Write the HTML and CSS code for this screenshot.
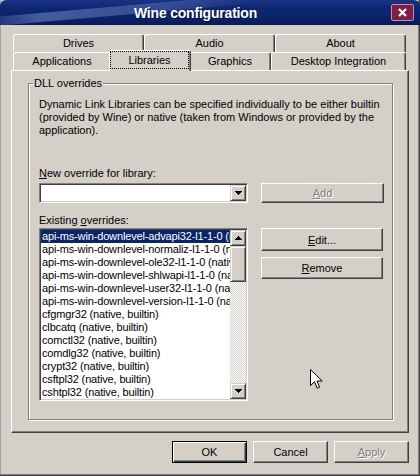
FILE: index.html
```html
<!DOCTYPE html>
<html lang="en">
<head>
  <meta charset="UTF-8" />
  <title>Wine configuration</title>
  <link rel="stylesheet" href="styles.css">
</head>
<body>
<div class="window">

  <!-- Title bar -->
  <div class="titlebar">
    <span class="title">Wine configuration</span>
    <span class="close-btn">
      <svg width="9" height="9" viewBox="0 0 9 9"><path d="M1 1L8 8M8 1L1 8" stroke="#fff" stroke-width="2.2"/></svg>
    </span>
  </div>

  <div class="client">
    <!-- Tabs -->
    <div class="tab-row">
      <div class="tab t-back">Drives</div>
      <div class="tab t-back">Audio</div>
      <div class="tab t-back">About</div>
    </div>
    <div class="tab-row">
      <div class="tab t-apps">Applications</div>
      <div class="tab t-libs active"><span class="focus">Libraries</span></div>
      <div class="tab t-gfx">Graphics</div>
      <div class="tab t-desk">Desktop Integration</div>
    </div>

    <!-- Tab page -->
    <div class="panel">
      <div class="group">
        <span class="group-label">DLL overrides</span>
        <p class="desc">Dynamic Link Libraries can be specified individually to be either builtin<br>(provided by Wine) or native (taken from Windows or provided by the<br>application).</p>

        <div class="field-label"><u>N</u>ew override for library:</div>
        <div class="row combo-row">
          <div class="combo">
            <div class="sbtn combo-btn">
              <svg width="7" height="4" viewBox="0 0 7 4" shape-rendering="crispEdges"><path d="M0 0h7v1H0zM1 1h5v1H1zM2 2h3v1H2zM3 3h1v1H3z"/></svg>
            </div>
          </div>
          <button class="btn disabled add-btn"><u>A</u>dd</button>
        </div>

        <div class="field-label second">Existing <u>o</u>verrides:</div>
        <div class="row">
          <div class="listbox">
            <ul class="items">
              <li class="selected">api-ms-win-downlevel-advapi32-l1-1-0 (native, builtin)</li>
              <li>api-ms-win-downlevel-normaliz-l1-1-0 (native, builtin)</li>
              <li>api-ms-win-downlevel-ole32-l1-1-0 (native, builtin)</li>
              <li>api-ms-win-downlevel-shlwapi-l1-1-0 (native, builtin)</li>
              <li>api-ms-win-downlevel-user32-l1-1-0 (native, builtin)</li>
              <li>api-ms-win-downlevel-version-l1-1-0 (native, builtin)</li>
              <li>cfgmgr32 (native, builtin)</li>
              <li>clbcatq (native, builtin)</li>
              <li>comctl32 (native, builtin)</li>
              <li>comdlg32 (native, builtin)</li>
              <li>crypt32 (native, builtin)</li>
              <li>csftpl32 (native, builtin)</li>
              <li>cshtpl32 (native, builtin)</li>
            </ul>
            <div class="scrollbar">
              <div class="sbtn">
                <svg width="7" height="4" viewBox="0 0 7 4" shape-rendering="crispEdges"><path d="M3 0h1v1H3zM2 1h3v1H2zM1 2h5v1H1zM0 3h7v1H0z"/></svg>
              </div>
              <div class="sbtn thumb"></div>
              <div class="track"></div>
              <div class="sbtn">
                <svg width="7" height="4" viewBox="0 0 7 4" shape-rendering="crispEdges"><path d="M0 0h7v1H0zM1 1h5v1H1zM2 2h3v1H2zM3 3h1v1H3z"/></svg>
              </div>
            </div>
          </div>
          <div class="side-btns">
            <button class="btn edit-btn"><u>E</u>dit...</button>
            <button class="btn remove-btn"><u>R</u>emove</button>
          </div>
        </div>
      </div>
    </div>

    <!-- Dialog buttons -->
    <div class="footer">
      <button class="btn dlg default">OK</button>
      <button class="btn dlg">Cancel</button>
      <button class="btn dlg disabled"><u>A</u>pply</button>
    </div>
  </div>

  <!-- mouse pointer -->
  <svg class="cursor" width="13" height="21" viewBox="0 0 13 21">
    <path d="M0.5 0.5V16.5L4.5 12.8L7.2 19.2L9.6 18.2L7 12H12.2Z" fill="#fff" stroke="#000" stroke-width="1" stroke-linejoin="miter"/>
  </svg>
</div>
</body>
</html>
```

FILE: styles.css
```css
body {
  margin: 0;
  font-family: "Liberation Sans", Arial, sans-serif;
  font-size: 11px;
  color: #000;
  background: #d4d0c8;
}
u {
  text-decoration: underline;
  text-underline-offset: 1px;
}

.window {
  position: relative;
  width: 420px;
  height: 476px;
  box-sizing: border-box;
  background: #d4d0c8;
  box-shadow: inset -1px -1px #404040, inset -2px -2px #808080, inset 1px 0 #a8a49c;
  overflow: hidden;
}

/* title bar */
.titlebar {
  position: relative;
  height: 25px;
  display: flex;
  align-items: center;
  border-radius: 6px 6px 0 0;
  background: linear-gradient(to bottom, #1a3484 0%, #0c2672 35%, #0a236a 70%, #081c58 100%);
  overflow: hidden;
}
.titlebar::before {
  content: "";
  position: absolute;
  left: -30px;
  top: 7px;
  width: 280px;
  height: 9px;
  background: linear-gradient(to right, rgba(110,130,195,0) 0%, rgba(110,130,195,.6) 25%, rgba(110,130,195,.4) 70%, rgba(110,130,195,0) 100%);
  transform: rotate(-5deg);
}
.title {
  position: relative;
  flex: 1;
  text-align: center;
  color: #fff;
  font-weight: bold;
  font-size: 14px;
  letter-spacing: -0.2px;
  text-shadow: 1px 1px 0 #05103a;
}
.close-btn {
  position: relative;
  width: 23px;
  height: 17px;
  margin-right: 6px;
  box-sizing: border-box;
  border: 1px solid #c58ea4;
  border-radius: 2px;
  background: #7c1f47;
  display: flex;
  align-items: center;
  justify-content: center;
}

.client {
  padding: 9px 11px 0 11px;
}

/* tabs */
.tab-row {
  display: flex;
  height: 18px;
  margin-left: 2px;
}
.tab {
  box-sizing: border-box;
  height: 18px;
  line-height: 17px;
  text-align: center;
  white-space: nowrap;
  background: #d4d0c8;
  border-top: 1px solid #fff;
  border-left: 1px solid #fff;
  border-right: 1px solid #404040;
  box-shadow: inset -1px 0 #808080;
  border-radius: 3px 3px 0 0;
}
.t-back { width: 131px; }
.t-apps { width: 98px; }
.t-libs { width: 78px; }
.t-gfx { width: 82px; }
.t-desk { width: 135px; }

.tab.active {
  position: relative;
  z-index: 1;
  width: 82px;
  height: 21px;
  margin: -2px -2px -1px -2px;
  padding: 1px 2px 2px 1px;
  line-height: 16px;
}
.tab.active .focus {
  display: block;
  height: 16px;
  outline: 1px dotted #000;
}

/* tab page */
.panel {
  box-sizing: border-box;
  width: 398px;
  height: 363px;
  border: 1px solid;
  border-color: #fff #404040 #404040 #fff;
  box-shadow: inset -1px -1px #808080;
  padding: 12px 0 0 16px;
}
.group {
  position: relative;
  box-sizing: border-box;
  width: 365px;
  height: 337px;
  border: 1px solid #808080;
  box-shadow: inset 1px 1px #fff, 1px 1px #fff;
  padding: 14px 0 0 10px;
}
.group-label {
  position: absolute;
  top: -7px;
  left: 4px;
  padding: 0 1px;
  line-height: 13px;
  background: #d4d0c8;
}
.desc {
  margin: 0;
  line-height: 13px;
  white-space: nowrap;
}
.field-label {
  margin-top: 30px;
  line-height: 13px;
}
.field-label.second {
  margin-top: 11px;
}
.row {
  display: flex;
  gap: 13px;
  margin-top: 1px;
}
.combo-row {
  margin-top: 3px;
}

/* sunken fields */
.combo, .listbox {
  box-sizing: border-box;
  width: 209px;
  background: #fff;
  border: 1px solid;
  border-color: #808080 #fff #fff #808080;
  box-shadow: inset 1px 1px #404040, inset -1px -1px #d4d0c8;
  padding: 1px;
}
.combo {
  height: 20px;
  display: flex;
  justify-content: flex-end;
}
.listbox {
  height: 173px;
  display: flex;
}

/* small raised buttons (scrollbar, combo) */
.sbtn {
  box-sizing: border-box;
  width: 16px;
  height: 16px;
  background: #d4d0c8;
  border: 1px solid;
  border-color: #d4d0c8 #404040 #404040 #d4d0c8;
  box-shadow: inset 1px 1px #fff, inset -1px -1px #808080;
  display: flex;
  align-items: center;
  justify-content: center;
}
.sbtn svg { display: block; }
.thumb { height: 36px; }

.items {
  flex: 1;
  margin: 0;
  padding: 0;
  list-style: none;
  overflow: hidden;
}
.items li {
  height: 13px;
  line-height: 13px;
  padding-left: 1px;
  white-space: nowrap;
  letter-spacing: -0.15px;
}
.items li.selected {
  background: #0a246a;
  color: #fff;
}
.scrollbar {
  width: 16px;
  display: flex;
  flex-direction: column;
}
.track {
  flex: 1;
  background-image: conic-gradient(#fff 25%, #d4d0c8 0 50%, #fff 0 75%, #d4d0c8 0);
  background-size: 2px 2px;
}

/* push buttons */
.btn {
  box-sizing: border-box;
  padding: 0;
  font: inherit;
  color: #000;
  background: #d4d0c8;
  border: 1px solid;
  border-color: #fff #404040 #404040 #fff;
  box-shadow: inset -1px -1px #808080;
  border-radius: 0;
  text-align: center;
}
.btn.disabled {
  color: #808080;
  text-shadow: 1px 1px 0 #fff;
}
.add-btn {
  width: 123px;
  height: 20px;
}
.side-btns {
  display: flex;
  flex-direction: column;
  gap: 6px;
}
.edit-btn, .remove-btn {
  width: 122px;
  height: 23px;
}
.remove-btn { height: 22px; }

.footer {
  display: flex;
  justify-content: flex-end;
  gap: 6px;
  margin-top: 8px;
}
.btn.dlg {
  width: 75px;
  height: 22px;
}
.btn.default {
  border: 1px solid #000;
  box-shadow: inset 1px 1px #fff, inset -1px -1px #404040, inset -2px -2px #808080;
}

.cursor {
  position: absolute;
  left: 310px;
  top: 369px;
}
```
